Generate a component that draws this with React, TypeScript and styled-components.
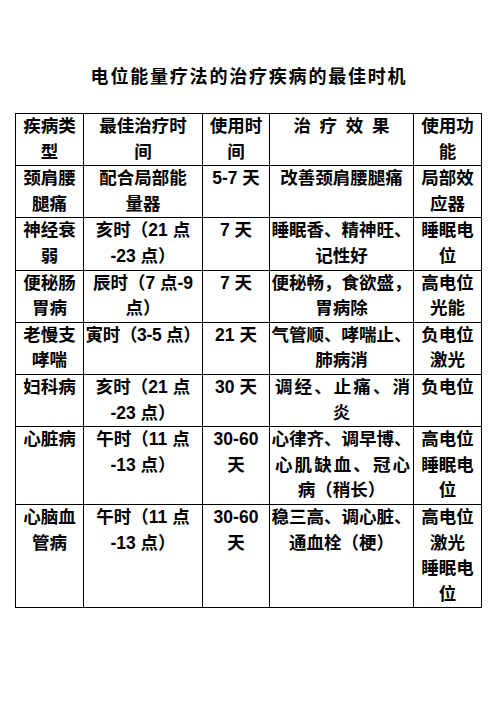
import React from "react";
import styled, { createGlobalStyle } from "styled-components";

const GlobalStyle = createGlobalStyle`
  html, body {
    margin: 0;
    padding: 0;
    background: #ffffff;
  }
  * { box-sizing: border-box; }
`;

const Page = styled.div`
  width: 496px;
  min-height: 702px;
  padding-top: 62px;
  background: #ffffff;
  color: #000000;
`;

const Title = styled.h1`
  margin: 0 0 25px 0;
  padding-left: 2px;
  text-align: center;
  font-family: "Noto Sans CJK SC", sans-serif;
  font-size: 18px;
  font-weight: 700;
  line-height: 26px;
  letter-spacing: 1.8px;
`;

const Grid = styled.div`
  margin-left: 15px;
  width: 467px;
  display: grid;
  grid-template-columns: 68px 119px 67px 144px 68px;
  border-left: 1px solid #000;
  border-top: 1px solid #000;
`;

const Cell = styled.div`
  border-right: 1px solid #000;
  border-bottom: 1px solid #000;
  padding: 0;
  text-align: center;
  font-family: "Liberation Sans", "Noto Sans CJK SC", sans-serif;
  font-size: 17.5px;
  font-weight: 700;
  line-height: 25.6px;
  white-space: nowrap;
  overflow: visible;
`;

const Line = styled.span<{ $justify?: boolean; $tight?: boolean }>`
  display: block;
  margin: ${(p) => (p.$justify ? "0 3px 0 5px" : "0")};
  text-align: ${(p) => (p.$justify ? "justify" : "center")};
  text-align-last: ${(p) => (p.$justify ? "justify" : "center")};
  letter-spacing: ${(p) => (p.$tight ? "-0.3px" : "0")};
`;

type Row = string[];

const rows: Row[] = [
  ["疾病类\n型", "最佳治疗时\n间", "使用时\n间", "治\u2002疗\u2002效\u2002果", "使用功\n能"],
  ["颈肩腰\n腿痛", "配合局部能\n量器", "5-7 天", "改善颈肩腰腿痛", "局部效\n应器"],
  ["神经衰\n弱", "亥时（21 点\n-23 点）", "7 天", "睡眠香、精神旺、\n记性好", "睡眠电\n位"],
  ["便秘肠\n胃病", "辰时（7 点-9\n点）", "7 天", "便秘畅，食欲盛，\n胃病除", "高电位\n光能"],
  ["老慢支\n哮喘", "~寅时（3-5 点）", "21 天", "气管顺、哮喘止、\n肺病消", "负电位\n激光"],
  ["妇科病", "亥时（21 点\n-23 点）", "30 天", "|调经、止痛、消\n炎", "负电位"],
  ["心脏病", "午时（11 点\n-13 点）", "30-60\n天", "心律齐、调早博、\n|心肌缺血、冠心\n病（稍长）", "高电位\n睡眠电\n位"],
  ["心脑血\n管病", "午时（11 点\n-13 点）", "30-60\n天", "稳三高、调心脏、\n通血栓（梗）", "高电位\n激光\n睡眠电\n位"],
];

function renderLines(text: string) {
  return text.split("\n").map((raw, i) => {
    let t = raw;
    let justify = false;
    let tight = false;
    if (t.startsWith("|")) {
      justify = true;
      t = t.slice(1);
    }
    if (t.startsWith("~")) {
      tight = true;
      t = t.slice(1);
    }
    return (
      <Line key={i} $justify={justify} $tight={tight}>
        {t}
      </Line>
    );
  });
}

export default function App() {
  return (
    <Page>
      <GlobalStyle />
      <Title>电位能量疗法的治疗疾病的最佳时机</Title>
      <Grid>
        {rows.map((row, r) =>
          row.map((cell, c) => <Cell key={`${r}-${c}`}>{renderLines(cell)}</Cell>)
        )}
      </Grid>
    </Page>
  );
}
